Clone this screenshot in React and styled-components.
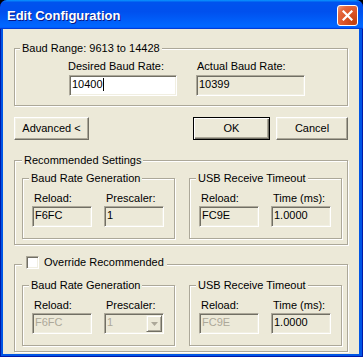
import React from 'react';
import styled, { createGlobalStyle, css } from 'styled-components';

const GlobalStyle = createGlobalStyle`
  html, body { margin: 0; padding: 0; background: #000; }
  body { width: 363px; height: 357px; overflow: hidden; }
  *, *::before, *::after { box-sizing: border-box; }
`;

const Window = styled.div`
  width: 363px;
  height: 357px;
  display: flex;
  flex-direction: column;
  background: #0055e5;
  border-radius: 7px 7px 0 0;
  overflow: hidden;
  box-shadow: inset 1px 0 #0019a8, inset -1px 0 #0019a8, inset 0 -1px #0019a8;
  font-family: "Liberation Sans", Arial, sans-serif;
  font-size: 11px;
  color: #000;
`;

const TitleBar = styled.div`
  height: 29px;
  flex: none;
  display: flex;
  align-items: center;
  justify-content: space-between;
  padding: 2px 5px 0 7px;
  border-radius: 7px 7px 0 0;
  background: linear-gradient(180deg, #0997ff, #0053ee 8%, #0050ee 40%, #0066ff 88%, #0066ff 93%, #005bff 95%, #003dd7 96%, #003dd7);
`;

const Title = styled.span`
  font-weight: bold;
  font-size: 13px;
  line-height: 15px;
  color: #fff;
  text-shadow: 1px 1px #0a1883;
  letter-spacing: 0;
`;

const CloseButton = styled.div`
  width: 21px;
  height: 21px;
  border: 1px solid #fff;
  border-radius: 3px;
  display: flex;
  align-items: center;
  justify-content: center;
  background: radial-gradient(circle at 85% 85%, #c2400f 0%, #dc5427 45%, #e4683e 75%, #f0a080 100%);
`;

const Client = styled.div`
  flex: 1;
  margin: 0 4px 3px 3px;
  background: #ece9d8;
  padding: 13px 11px 0;
  display: flex;
  flex-direction: column;
`;

const Group = styled.fieldset`
  margin: ${p => p.$mt || 0}px 0 0;
  padding: ${p => p.$pt}px ${p => p.$pr || 0}px ${p => p.$pb}px ${p => p.$pl}px;
  border: 1px solid #aca899;
  box-shadow: inset 1px 1px #fff, 1px 1px #fff;
  min-width: 0;
  width: ${p => (p.$w ? `${p.$w}px` : 'auto')};
  flex: none;
`;

const Legend = styled.legend`
  padding: 0 ${p => p.$pr ?? 2}px 0 ${p => p.$pl ?? 2}px;
  line-height: 13px;
  background: #ece9d8;
  white-space: nowrap;
`;

const CheckLabel = styled.span`
  display: inline-flex;
  align-items: center;
  gap: 5px;
  height: 13px;
`;

const CheckBox = styled.span`
  display: inline-block;
  width: 13px;
  height: 13px;
  background: #fff;
  border: 1px solid;
  border-color: #aca899 #fff #fff #aca899;
  box-shadow: inset 1px 1px #716f64, inset -1px -1px #f1efe2;
`;

const Row = styled.div`
  display: flex;
  gap: ${p => p.$gap || 0}px;
  margin-left: ${p => p.$ml || 0}px;
`;

const Field = styled.div`
  display: flex;
  flex-direction: column;
  gap: ${p => p.$gap}px;
  width: ${p => p.$w}px;
`;

const Label = styled.div`
  line-height: 13px;
  padding-left: ${p => p.$pl || 0}px;
  margin-left: ${p => p.$ml || 0}px;
  white-space: nowrap;
`;

const TextBox = styled.div`
  height: 21px;
  border: 1px solid;
  border-color: #aca899 #fff #fff #aca899;
  box-shadow: inset 1px 1px #716f64, inset -1px -1px #f1efe2;
  background: ${p => (p.$white ? '#fff' : '#ece9d8')};
  color: ${p => (p.$disabled ? '#aca899' : '#000')};
  padding: 1px 2px;
  line-height: 15px;
  white-space: nowrap;
`;

const Combo = styled(TextBox)`
  display: flex;
  justify-content: space-between;
  padding: 1px 1px 1px 2px;
`;

const DropButton = styled.div`
  width: 16px;
  height: 17px;
  background: #ece9d8;
  border: 1px solid;
  border-color: #f1efe2 #716f64 #716f64 #f1efe2;
  box-shadow: inset 1px 1px #fff, inset -1px -1px #aca899;
  display: flex;
  align-items: center;
  justify-content: center;
`;

const Caret = styled.span`
  display: inline-block;
  width: 1px;
  height: 13px;
  background: #000;
  vertical-align: -3px;
`;

const ButtonRow = styled.div`
  display: flex;
  align-items: center;
  margin-top: 11px;
  gap: ${p => p.$gap || 0}px;
`;

const Spacer = styled.div`
  flex: 1;
`;

const Button = styled.div`
  width: ${p => p.$w}px;
  height: 23px;
  display: flex;
  align-items: center;
  justify-content: center;
  background: #ece9d8;
  border: 1px solid;
  border-color: #fff #716f64 #716f64 #fff;
  box-shadow: inset -1px -1px #aca899, inset 1px 1px #f1efe2;
  line-height: 13px;
  white-space: nowrap;
  ${p =>
    p.$default &&
    css`
      border-color: #000;
      box-shadow: inset 1px 1px #fff, inset -1px -1px #716f64, inset -2px -2px #aca899;
    `}
`;

const FieldPair = ({ label1, value1, label2, value2, disabled1, combo, disabled2 }) => (
  <Row $ml={3} $gap={12}>
    <Field $w={60} $gap={1}>
      <Label $pl={2}>{label1}</Label>
      <TextBox $disabled={disabled1}>{value1}</TextBox>
    </Field>
    <Field $w={60} $gap={1}>
      <Label $pl={2}>{label2}</Label>
      {combo ? (
        <Combo $disabled={disabled2}>
          <span>{value2}</span>
          <DropButton>
            <svg width="7" height="4" viewBox="0 0 7 4">
              <path d="M0 0h7L3.5 4z" fill="#aca899" />
            </svg>
          </DropButton>
        </Combo>
      ) : (
        <TextBox $disabled={disabled2}>{value2}</TextBox>
      )}
    </Field>
  </Row>
);

const Settings = ({ disabled }) => (
  <Row $gap={14}>
    <Group $w={153} $pt={7} $pb={11} $pl={6}>
      <Legend>Baud Rate Generation</Legend>
      <FieldPair
        label1="Reload:"
        value1="F6FC"
        label2="Prescaler:"
        value2="1"
        disabled1={disabled}
        disabled2={disabled}
        combo={disabled}
      />
    </Group>
    <Group $w={153} $pt={7} $pb={11} $pl={6}>
      <Legend>USB Receive Timeout</Legend>
      <FieldPair
        label1="Reload:"
        value1="FC9E"
        label2="Time (ms):"
        value2="1.0000"
        disabled1={disabled}
      />
    </Group>
  </Row>
);

export default function App() {
  return (
    <>
      <GlobalStyle />
      <Window>
        <TitleBar>
          <Title>Edit Configuration</Title>
          <CloseButton>
            <svg width="11" height="11" viewBox="0 0 11 11">
              <path d="M1.5 1.5l8 8M9.5 1.5l-8 8" stroke="#fff" strokeWidth="2.2" strokeLinecap="square" />
            </svg>
          </CloseButton>
        </TitleBar>
        <Client>
          <Group $pt={5} $pb={9} $pl={5}>
            <Legend>Baud Range: 9613 to 14428</Legend>
            <Row $ml={49} $gap={19}>
              <Field $w={108} $gap={2}>
                <Label $ml={-1}>Desired Baud Rate:</Label>
                <TextBox $white>
                  10400
                  <Caret />
                </TextBox>
              </Field>
              <Field $w={109} $gap={2}>
                <Label $pl={1}>Actual Baud Rate:</Label>
                <TextBox>10399</TextBox>
              </Field>
            </Row>
          </Group>
          <ButtonRow $gap={6}>
            <Button $w={75}>Advanced &lt;</Button>
            <Spacer />
            <Button $w={77} $default>OK</Button>
            <Button $w={72}>Cancel</Button>
          </ButtonRow>
          <Group $mt={14} $pt={5} $pb={5} $pl={7}>
            <Legend>Recommended Settings</Legend>
            <Settings />
          </Group>
          <Group $mt={11} $pt={7} $pb={5} $pl={7}>
            <Legend $pl={4} $pr={3}>
              <CheckLabel>
                <CheckBox />
                Override Recommended
              </CheckLabel>
            </Legend>
            <Settings disabled />
          </Group>
        </Client>
      </Window>
    </>
  );
}
